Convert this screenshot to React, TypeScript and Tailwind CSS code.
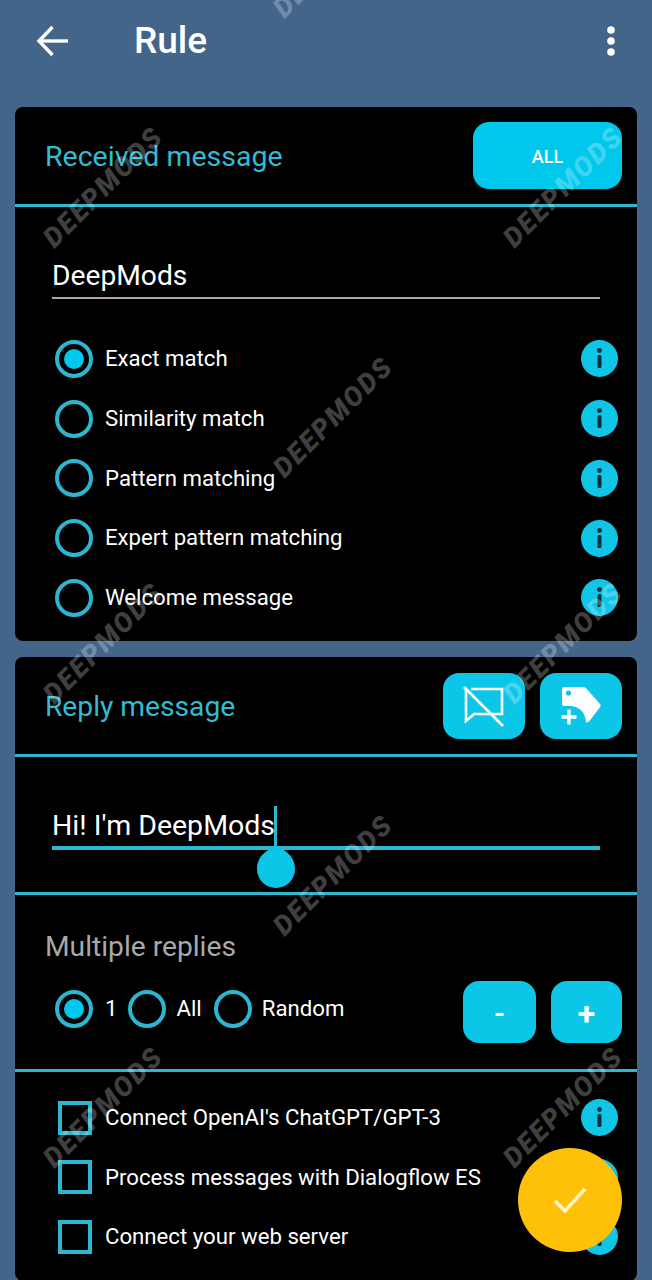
const rules = ["Exact match", "Similarity match", "Pattern matching", "Expert pattern matching", "Welcome message"]
const options = ["Connect OpenAI's ChatGPT/GPT-3", "Process messages with Dialogflow ES", "Connect your web server"]

const marks = [
  "left-[333px] top-[-43px]",
  "left-[103px] top-[187px]",
  "left-[563px] top-[187px]",
  "left-[333px] top-[417px]",
  "left-[103px] top-[643px]",
  "left-[563px] top-[643px]",
  "left-[333px] top-[875px]",
  "left-[103px] top-[1107px]",
  "left-[563px] top-[1107px]",
]

function Radio({ checked = false }: { checked?: boolean }) {
  return (
    <span className="flex h-[38px] w-[38px] shrink-0 items-center justify-center rounded-full border-4 border-[#2cb6d0]">
      {checked && <span className="h-[20px] w-[20px] rounded-full bg-[#00c8ec]" />}
    </span>
  )
}

function Info() {
  return (
    <svg width="37" height="37" viewBox="0 0 37 37" className="shrink-0">
      <circle cx="18.5" cy="18.5" r="18.5" fill="#10c5e6" />
      <circle cx="18.5" cy="10.5" r="2.4" fill="#06303c" />
      <rect x="16.5" y="15" width="4" height="13" rx="1.5" fill="#06303c" />
    </svg>
  )
}

function Divider() {
  return <div className="h-[3px] bg-[#2cb6d0]" />
}

function IconButton({ children }: { children: React.ReactNode }) {
  return (
    <button className="flex h-[66px] w-[82px] items-center justify-center rounded-[16px] bg-[#0cc6e8]">
      {children}
    </button>
  )
}

export default function App() {
  return (
    <div className="relative h-[1280px] w-[652px] overflow-hidden bg-[#44658a] font-['Roboto',sans-serif] text-white">
      <div className="flex h-[107px] items-start px-[15px]">
        <div className="flex h-[81px] w-full items-center">
          <svg width="34" height="32" viewBox="0 0 34 32" className="ml-[21px] shrink-0" fill="none" stroke="white" strokeWidth="3.4">
            <path d="M32 16H3" />
            <path d="M16.5 2 3 16l13.5 14" />
          </svg>
          <h1 className="ml-[64px] text-[37px] leading-none font-medium">Rule</h1>
          <svg width="10" height="30" viewBox="0 0 10 30" className="ml-auto mr-[21px]" fill="white">
            <circle cx="5" cy="4" r="3.800" />
            <circle cx="5" cy="15" r="3.800" />
            <circle cx="5" cy="26" r="3.800" />
          </svg>
        </div>
      </div>

      <section className="mx-[15px] h-[534px] rounded-lg bg-black">
        <div className="flex h-[97px] items-center justify-between pl-[30px] pr-[15px]">
          <h2 className="pt-[3px] text-[28.5px] text-[#30bdd4]">Received message</h2>
          <button className="flex h-[67px] w-[149px] items-center justify-center rounded-[16px] bg-[#00c8ec] text-[18px] font-medium">
            <span className="pt-[2px]">ALL</span>
          </button>
        </div>
        <Divider />
        <div className="mx-[37px] mt-[50px] h-[42px] border-b-2 border-[#a8a8a8] text-[28.2px] leading-[38px]">DeepMods</div>
        <div className="mt-[30px] flex flex-col">
          {rules.map((rule, i) => (
            <div key={rule} className="flex h-[59.75px] items-center pl-[40px] pr-[19px]">
              <Radio checked={i === 0} />
              <span className="ml-[12px] text-[22.2px]">{rule}</span>
              <span className="ml-auto">
                <Info />
              </span>
            </div>
          ))}
        </div>
      </section>

      <section className="mx-[15px] mt-[16px] h-[624px] rounded-lg bg-black">
        <div className="flex h-[97px] items-center justify-between pl-[30px] pr-[15px]">
          <h2 className="pt-[3px] text-[28.2px] text-[#30bdd4]">Reply message</h2>
          <div className="flex gap-[15px]">
            <IconButton>
              <svg width="44" height="44" viewBox="0 0 44 44" fill="none" stroke="white" strokeWidth="2.6">
                <path d="M9 5h31v25H12l-8 7V5" />
                <path d="M2 3l39 39" />
              </svg>
            </IconButton>
            <IconButton>
              <svg width="44" height="44" viewBox="0 0 44 44">
                <path d="M5 3h19c1.500 0 2.500.5 3.500 1.800L41 20c.8 1 .8 2.200 0 3.200L30.500 37c-1 1.200-2.300 1.700-3.500 1.300C26.500 28 20 22 10 22H5c-1 0-2-1-2-2V5c0-1 1-2 2-2z" fill="white" />
                <circle cx="9.500" cy="9" r="2.600" fill="#0cc6e8" />
                <path d="M10 25.500v15M2.500 33h15" stroke="white" strokeWidth="3.400" />
              </svg>
            </IconButton>
          </div>
        </div>
        <Divider />
        <div className="relative mx-[37px] mt-[48px] h-[45px] border-b-4 border-[#2cb6d0] text-[28.5px] leading-[42px]">
          <span>Hi! I'm DeepMods</span>
          <span className="absolute left-[222px] top-[1px] h-[40px] w-[3px] bg-[#2cb6d0]" />
          <svg width="38" height="44" viewBox="0 0 38 44" className="absolute left-[205px] top-[40px]">
            <path d="M19 0c2 3 19 7 19 24a19 19 0 0 1-38 0C0 7 17 3 19 0z" fill="#0cc6e8" />
          </svg>
        </div>
        <div className="mt-[42px]">
          <Divider />
        </div>
        <h2 className="mt-[35px] pl-[30px] text-[28.2px] leading-[34px] text-[#a9a9a9]">Multiple replies</h2>
        <div className="mt-[17px] flex h-[62px] items-center pl-[40px] pr-[15px]">
          <div className="mb-[6px] flex items-center">
            <Radio checked />
            <span className="ml-[12px] text-[22.2px]">1</span>
            <span className="ml-[11px]">
              <Radio />
            </span>
            <span className="ml-[10px] text-[22.2px]">All</span>
            <span className="ml-[12px]">
              <Radio />
            </span>
            <span className="ml-[10px] text-[22.2px]">Random</span>
          </div>
          <button className="ml-auto flex h-[62px] w-[73px] items-center justify-center rounded-[16px] bg-[#0cc6e8] pt-[4px] text-[28px] font-bold">-</button>
          <button className="ml-[15px] flex h-[62px] w-[71px] items-center justify-center rounded-[16px] bg-[#0cc6e8] pt-[4px] text-[32px] font-bold">+</button>
        </div>
        <div className="mt-[26px]">
          <Divider />
        </div>
        <div className="mt-[16px] flex flex-col">
          {options.map((label) => (
            <div key={label} className="flex h-[59.5px] items-center pl-[43px] pr-[19px]">
              <span className="h-[34px] w-[34px] shrink-0 border-4 border-[#2cb6d0]" />
              <span className="ml-[13px] text-[22.2px]">{label}</span>
              <span className="ml-auto">
                <Info />
              </span>
            </div>
          ))}
        </div>
      </section>

      <div className="pointer-events-none absolute inset-0">
        {marks.map((pos) => (
          <span
            key={pos}
            className={`absolute ${pos} -translate-x-1/2 -translate-y-1/2 -rotate-45 text-[27.5px] font-black italic tracking-[2px] text-white/25`}
          >
            DEEPMODS
          </span>
        ))}
      </div>

      <button className="absolute bottom-[28px] right-[30px] flex h-[104px] w-[104px] items-center justify-center rounded-full bg-[#ffc107]">
        <svg width="34" height="28" viewBox="0 0 34 28" fill="none" stroke="#fff3c4" strokeWidth="3.6">
          <path d="M2 15l10 10L32 3" />
        </svg>
      </button>
    </div>
  )
}
